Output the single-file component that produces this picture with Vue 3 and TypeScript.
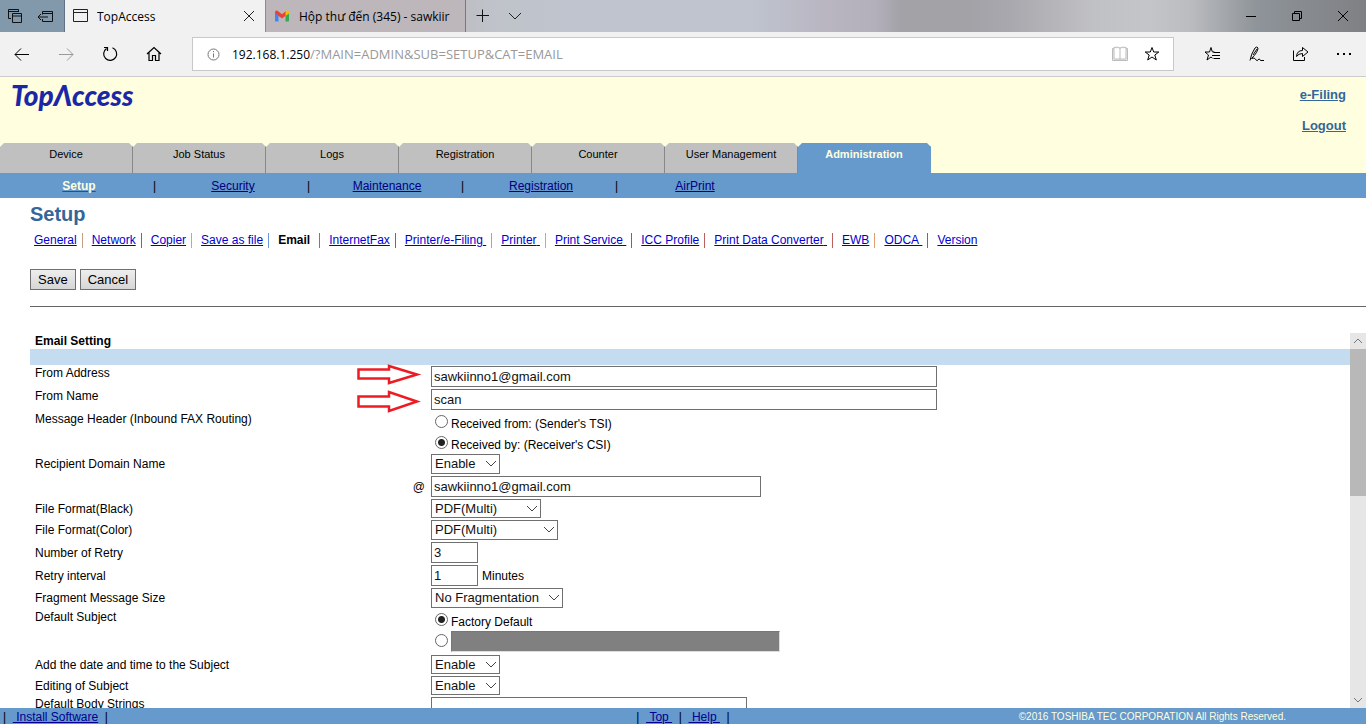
<script setup lang="ts">
import { ref } from 'vue'

interface Link { label: string; trail?: boolean; current?: boolean; bar?: string }

const tabs = ['Device', 'Job Status', 'Logs', 'Registration', 'Counter', 'User Management', 'Administration']
const sections = ['Setup', 'Security', 'Maintenance', 'Registration', 'AirPrint']
const pages: Link[] = [
  { label: 'General', bar: 'gold' },
  { label: 'Network', bar: 'violet' },
  { label: 'Copier', bar: 'orange' },
  { label: 'Save as file', bar: 'blue' },
  { label: 'Email', current: true, bar: 'red' },
  { label: 'InternetFax', bar: 'plum' },
  { label: 'Printer/e-Filing', trail: true, bar: 'gold' },
  { label: 'Printer', trail: true, bar: 'orange' },
  { label: 'Print Service', trail: true, bar: 'plum' },
  { label: 'ICC Profile', bar: 'red' },
  { label: 'Print Data Converter', trail: true, bar: 'red' },
  { label: 'EWB', bar: 'orange' },
  { label: 'ODCA', trail: true, bar: 'violet' },
  { label: 'Version' },
]

const fromAddress = ref('sawkiinno1@gmail.com')
const fromName = ref('scan')
const header = ref('by')
const domainEnabled = ref('Enable')
const domain = ref('sawkiinno1@gmail.com')
const black = ref('PDF(Multi)')
const color = ref('PDF(Multi)')
const retries = ref('3')
const interval = ref('1')
const fragment = ref('No Fragmentation')
const subject = ref('factory')
const customSubject = ref('')
const addDate = ref('Enable')
const editSubject = ref('Enable')
const body = ref('')
</script>

<template>
  <div class="window">
    <header class="titlebar">
      <div class="aside-tools">
        <button type="button" aria-label="Tabs set aside">
          <svg width="16" height="16" viewBox="0 0 16 16" fill="none" stroke="#111"><path d="M4 10.500H1.500V1.500H11.500V4M1.500 3.500H11M5.500 5.500H14.500V14.500H5.500ZM5.500 8H14.500"/></svg>
        </button>
        <button type="button" aria-label="Set these tabs aside">
          <svg width="16" height="16" viewBox="0 0 16 16" fill="none" stroke="#111"><path d="M5.500 6.500V3.500H15.500V13.500H5.500V11M5.500 5.500H15.500M11 9H1M4 6L1 9L4 12"/></svg>
        </button>
      </div>
      <div class="browser-tab active">
        <svg width="17" height="14" viewBox="0 0 17 14" fill="none" stroke="#222"><path d="M1.500 .5H15.500V12.500H1.500ZM1.500 3.500H15.500"/></svg>
        <span class="tab-title">TopAccess</span>
        <button type="button" aria-label="Close tab">
          <svg width="12" height="12" viewBox="0 0 12 12" stroke="#222"><path d="M1 1L11 11M11 1L1 11"/></svg>
        </button>
      </div>
      <div class="browser-tab mail">
        <svg width="14" height="12" viewBox="0 0 14 12"><path fill="#4285f4" d="M0 2L3.500 4.500V11.500H1Q0 11.500 0 10.500Z"/><path fill="#34a853" d="M10.500 4.500L14 2V10.500Q14 11.500 13 11.500H10.500Z"/><path fill="#ea4335" d="M0 2Q.5-.2 2.500 .8L7 4.200L11 1V5.500L7 8.500L3 5.500L0 3Z"/><path fill="#fbbc04" d="M10.500 1.500Q13.500-1 14 2V3.500L10.500 6Z"/></svg>
        <span class="tab-title">Hộp thư đến (345) - sawkiir</span>
      </div>
      <div class="tab-actions">
        <button type="button" aria-label="New tab"><svg width="14" height="14" viewBox="0 0 14 14" stroke="#111"><path d="M.5 6.500H13M6.500 .5V13"/></svg></button>
        <button type="button" aria-label="Tab previews"><svg width="14" height="8" viewBox="0 0 14 8" fill="none" stroke="#222"><path d="M1 1L7 7L13 1"/></svg></button>
      </div>
      <div class="window-controls">
        <button type="button" aria-label="Minimize"><svg width="12" height="12" viewBox="0 0 12 12" stroke="#000"><path d="M1 6.500H11"/></svg></button>
        <button type="button" aria-label="Restore"><svg width="12" height="12" viewBox="0 0 12 12" fill="none" stroke="#000"><path d="M1.500 3.500H8.500V10.500H1.500ZM3.500 3.500V1.500H10.500V8.500H8.500"/></svg></button>
        <button type="button" aria-label="Close"><svg width="12" height="12" viewBox="0 0 12 12" stroke="#000"><path d="M1 1L11 11M11 1L1 11"/></svg></button>
      </div>
    </header>

    <div class="toolbar">
      <div class="nav-buttons">
        <button type="button" aria-label="Back"><svg width="16" height="14" viewBox="0 0 16 14" fill="none" stroke="#000"><path d="M15 7.500H1M7 1.500L1 7.500L7 13.500"/></svg></button>
        <button type="button" aria-label="Forward" disabled><svg width="16" height="14" viewBox="0 0 16 14" fill="none" stroke="#999"><path d="M1 7.500H15M9 1.500L15 7.500L9 13.500"/></svg></button>
        <button type="button" aria-label="Refresh"><svg width="16" height="16" viewBox="0 0 16 16" fill="none" stroke="#000" stroke-width="1.200"><path d="M10.500 1.800A6.500 6.500 0 1 1 4.500 2.500M2 1.500H5.500V5"/></svg></button>
        <button type="button" aria-label="Home"><svg width="16" height="16" viewBox="0 0 16 16" fill="none" stroke="#000" stroke-width="1.200"><path d="M1 8L8 1.500L15 8M3 6.500V14.500H6.500V9.500H9.500V14.500H13V6.500"/></svg></button>
      </div>
      <div class="address">
        <svg width="13" height="13" viewBox="0 0 13 13" fill="none" stroke="#777"><circle cx="6.500" cy="6.500" r="5.500"/><path d="M6.500 5.500V9.500M6.500 3V4.200"/></svg>
        <a class="url" href="#"><b>192.168.1.250</b>/?MAIN=ADMIN&amp;SUB=SETUP&amp;CAT=EMAIL</a>
        <button type="button" aria-label="Reading view" disabled><svg width="16" height="16" viewBox="0 0 16 16" fill="#f0f0f0" stroke="#bbb"><path d="M.5 2.500H2V1.500Q5.500 .5 8 2Q10.500 .5 14 1.500V2.500H15.500V14.500H.5ZM8 2V13.500M2 2.500V13H14V2.500"/></svg></button>
        <button type="button" class="favorite" aria-label="Add to favorites"><svg width="16" height="16" viewBox="0 0 16 16" fill="none" stroke="#000"><path d="M8 1.500L9.700 6H14.800L10.800 9L12.300 14L8 11L3.700 14L5.200 9L1.200 6H6.300Z"/></svg></button>
      </div>
      <div class="side-buttons">
        <button type="button" aria-label="Hub"><svg width="18" height="16" viewBox="0 0 18 16" fill="none" stroke="#000"><path d="M10.500 6L8.300 5.800L7 1.500L5.500 6H1L4.500 9L3 14L7 11L8.500 12.200M9.500 6.500H16M8 9.500H16M9.500 12.500H16"/></svg></button>
        <button type="button" aria-label="Notes"><svg width="16" height="16" viewBox="0 0 16 16" fill="none" stroke="#000"><path d="M1 14.500Q2 8 6 2Q8 0 9 2Q9 6 2.500 12.500Q6 11 6.500 13.500Q8 16 10 13Q11 13 11.500 14.500H15M4 9L8 3"/></svg></button>
        <button type="button" aria-label="Share"><svg width="16" height="16" viewBox="0 0 16 16" fill="none" stroke="#000"><path d="M.5 4.500V14.500H11.500V11M3.500 10.500Q4 4.500 9.500 4.500V1.500L15 6L9.500 10.500V7.500Q5.500 7.500 3.500 10.500Z"/></svg></button>
        <button type="button" aria-label="More"><svg width="16" height="4" viewBox="0 0 16 4"><path d="M1 1H3V3H1ZM7 1H9V3H7ZM13 1H15V3H13Z"/></svg></button>
      </div>
    </div>

    <div class="banner">
      <h1 class="logo" aria-label="TopAccess">TopΛccess</h1>
      <div class="session">
        <a href="#">e-Filing</a>
        <a href="#">Logout</a>
      </div>
      <nav class="tabs">
        <button v-for="(t, i) in tabs" :key="t" type="button" :class="{ selected: i === 6 }">{{ t }}</button>
      </nav>
    </div>
    <nav class="sections">
      <div v-for="(s, i) in sections" :key="s" class="section">
        <a href="#" :class="{ selected: i === 0 }">{{ s }}</a>
        <span v-if="i < sections.length - 1" class="divider">|</span>
      </div>
    </nav>

    <div class="intro">
      <h2>Setup</h2>
      <nav class="pages">
        <span v-for="p in pages" :key="p.label" class="page" :class="[p.bar, { current: p.current }]">
          <b v-if="p.current">{{ p.label }}</b>
          <a v-else href="#">{{ p.label }}<template v-if="p.trail">&nbsp;</template></a>
        </span>
      </nav>
      <div class="actions">
        <button type="button">Save</button>
        <button type="button">Cancel</button>
      </div>
      <hr>
    </div>

    <main class="scroller">
      <form class="settings" @submit.prevent>
        <h3>Email Setting</h3>
        <div class="band"></div>
        <div class="row">
          <label class="name top" for="from-address">From Address</label>
          <div class="field">
            <svg class="pointer" width="66" height="24" viewBox="0 0 66 24" fill="none" stroke="#ed1c24" stroke-width="2.500"><path d="M2.500 7.500H33V4L61 12.500L33 21V16.500H2.500Z"/></svg>
            <input id="from-address" v-model="fromAddress" class="wide" type="text">
          </div>
        </div>
        <div class="row">
          <label class="name top" for="from-name">From Name</label>
          <div class="field">
            <svg class="pointer" width="66" height="30" viewBox="0 0 66 30" fill="none" stroke="#ed1c24" stroke-width="2.500"><path d="M2.500 11.500H33V7L61 16.500L33 26V21.500H2.500Z"/></svg>
            <input id="from-name" v-model="fromName" class="wide" type="text">
          </div>
        </div>
        <div class="row">
          <span class="name top">Message Header (Inbound FAX Routing)</span>
          <div class="choices">
            <label><input v-model="header" type="radio" name="header" value="from"><span>Received from: (Sender's TSI)</span></label>
            <label><input v-model="header" type="radio" name="header" value="by"><span>Received by: (Receiver's CSI)</span></label>
          </div>
        </div>
        <div class="row mid">
          <label class="name" for="domain-on">Recipient Domain Name</label>
          <div class="field"><select id="domain-on" v-model="domainEnabled" class="short"><option>Enable</option><option>Disable</option></select></div>
        </div>
        <div class="row">
          <label class="name at" for="domain">@</label>
          <div class="field"><input id="domain" v-model="domain" class="medium" type="text"></div>
        </div>
        <div class="row compact">
          <label class="name" for="black">File Format(Black)</label>
          <div class="field"><select id="black" v-model="black" class="format"><option>PDF(Multi)</option></select></div>
        </div>
        <div class="row mid">
          <label class="name" for="color">File Format(Color)</label>
          <div class="field"><select id="color" v-model="color" class="format-color"><option>PDF(Multi)</option></select></div>
        </div>
        <div class="row">
          <label class="name" for="retries">Number of Retry</label>
          <div class="field"><input id="retries" v-model="retries" class="tiny" type="text"></div>
        </div>
        <div class="row">
          <label class="name" for="interval">Retry interval</label>
          <div class="field"><input id="interval" v-model="interval" class="tiny" type="text"><span class="unit">Minutes</span></div>
        </div>
        <div class="row mid">
          <label class="name" for="fragment">Fragment Message Size</label>
          <div class="field"><select id="fragment" v-model="fragment" class="fragment"><option>No Fragmentation</option></select></div>
        </div>
        <div class="row">
          <span class="name top">Default Subject</span>
          <div class="choices">
            <label><input v-model="subject" type="radio" name="subject" value="factory"><span>Factory Default</span></label>
            <div class="custom">
              <input v-model="subject" type="radio" name="subject" value="custom" aria-label="Custom subject">
              <input v-model="customSubject" class="greyed" type="text" disabled aria-label="Custom subject text">
            </div>
          </div>
        </div>
        <div class="row compact">
          <label class="name" for="add-date">Add the date and time to the Subject</label>
          <div class="field"><select id="add-date" v-model="addDate" class="short"><option>Enable</option><option>Disable</option></select></div>
        </div>
        <div class="row compact">
          <label class="name" for="edit-subject">Editing of Subject</label>
          <div class="field"><select id="edit-subject" v-model="editSubject" class="short"><option>Enable</option><option>Disable</option></select></div>
        </div>
        <div class="row">
          <label class="name top" for="body">Default Body Strings</label>
          <div class="field"><textarea id="body" v-model="body"></textarea></div>
        </div>
      </form>
      <div class="scrollbar">
        <svg width="16" height="16" viewBox="0 0 16 16" fill="none" stroke="#777"><path d="M4 10L8 6L12 10"/></svg>
        <div class="track"><div class="thumb"></div></div>
        <svg width="16" height="16" viewBox="0 0 16 16" fill="none" stroke="#777"><path d="M4 6L8 10L12 6"/></svg>
      </div>
    </main>

    <footer class="footer">
      <div class="left">|&nbsp; <a href="#">&nbsp;Install Software</a>&nbsp; |</div>
      <div class="center">| &nbsp;<a href="#">&nbsp;Top&nbsp;</a>&nbsp; | &nbsp;<a href="#">&nbsp;Help&nbsp;</a>&nbsp; |</div>
      <div class="copyright">©2016 TOSHIBA TEC CORPORATION All Rights Reserved.</div>
    </footer>
  </div>
</template>

<style>
body { margin: 0; background: #fff; }
</style>

<style scoped>
* { box-sizing: border-box; }
.window {
  display: flex; flex-direction: column; height: 100vh; overflow: hidden;
  font: 12px/14px "Liberation Sans", Arial, sans-serif; color: #000;
}
button { font: inherit; color: inherit; background: none; border: 0; padding: 0; }
svg { display: block; flex: none; }

.titlebar {
  display: flex; flex: none; height: 32px;
  font-family: "Open Sans", "Noto Sans", sans-serif;
  background: linear-gradient(90deg, #8299ac 0, #8299ac 5%, #b3b3be 20%, #bdb5ba 30%, #bfc3c9 36%, #bfc4ce 42%, #bfc4ce 55%, #b8b4c0 61%, #b3b0bb 64%, #a3a2a7 66%, #a3a2a7 71%, #a9a8ae 74%, #c0c1c4 80%, #c4c5c8 84%, #bcbdc0 87%, #8e9499 92%, #7f8084 100%);
}
.aside-tools { display: flex; width: 65px; padding-right: 4px; border-right: 1px solid #5f7384; }
.aside-tools button { flex: 1; display: grid; place-items: center; }
.browser-tab { display: flex; align-items: center; width: 200px; }
.browser-tab.active { padding: 0 10px 0 7px; gap: 8px; background: #f1f1f1; border-right: 1px solid #8d8b91; width: 201px; }
.browser-tab.mail { padding-left: 9px; gap: 10px; border-right: 1px solid #77787e; background: #bdb6bb; }
.tab-title { flex: 1; overflow: hidden; white-space: nowrap; line-height: 20px; padding-top: 1px; }
.tab-actions { display: flex; gap: 18px; padding-left: 10px; }
.window-controls { display: flex; margin-left: auto; }
.window-controls button { width: 46px; display: grid; place-items: center; }

.toolbar { display: flex; flex: none; align-items: center; height: 45px; background: #f1f1f1; border-bottom: 1px solid #ccc; }
.nav-buttons { display: flex; width: 192px; padding-left: 14px; gap: 28px; align-items: center; }
.address {
  display: flex; flex: 1; align-items: center; gap: 12px; height: 34px; padding: 0 13px 0 14px;
  background: #fff; border: 1px solid #c8c8c8;
}
.favorite { margin-left: 4px; }
.url { flex: 1; margin-right: auto; color: #999; text-decoration: none; font: 13px/20px "Open Sans", "Noto Sans", sans-serif; }
.url b { font-weight: 400; font-size: 12px; color: #000; }
.side-buttons { display: flex; justify-content: space-between; align-items: center; width: 192px; padding: 0 14px 0 30px; }

.banner { flex: none; display: grid; grid-template-columns: 1fr auto; background: #ffffdf; }
.logo { margin: 0; padding-left: 11px; font: italic 900 28px/36px Lato, sans-serif; color: #1a28a8; }
.session { display: grid; gap: 17px; padding: 11px 20px 10px 0; justify-items: end; font: bold 13px/14px "Liberation Sans", Arial, sans-serif; }
.session a { color: #336699; }
.tabs { display: flex; grid-column: 1 / -1; height: 30px; font-size: 11px; }
.tabs button {
  width: 133px; padding-bottom: 8px; background: #c0c0c0; border-right: 1px solid #888;
  clip-path: polygon(0 4px, 4px 0, calc(100% - 4px) 0, 100% 4px, 100% 100%, 0 100%);
}
.tabs .selected { background: #6699cc; color: #ffffdf; font-weight: bold; border-color: #6699cc; }

.sections { flex: none; display: flex; height: 25px; padding-left: 2px; background: #6699cc; line-height: 26px; }
.section { position: relative; width: 154px; text-align: center; }
.section a { color: #000080; }
.section .selected { font-weight: bold; color: #ffffdf; text-decoration-color: green; }
.divider { position: absolute; right: 0; top: 0; }

.intro { flex: none; padding-left: 30px; }
h2 { margin: 0; padding-top: 4px; font-size: 20px; line-height: 24px; color: #336699; }
.pages { display: flex; padding: 7px 0 0 4px; white-space: nowrap; line-height: 15px; }
.page { padding-right: 5px; margin-right: 9px; border-right: 1px solid transparent; }
.page a { color: #0000cc; }
.page.current { padding-right: 9px; }
.gold { border-color: #c0a080; }
.orange { border-color: #e0a070; }
.violet { border-color: #6a62b8; }
.blue { border-color: #6a9ad8; }
.red { border-color: #b86060; }
.plum { border-color: #806080; }
.actions { display: flex; gap: 4px; padding-top: 21px; }
.actions button {
  height: 21px; padding: 0 7px; font-size: 13px; line-height: 19px;
  border: 1px solid #707070; background: linear-gradient(#eee, #d6d6d6);
}
hr { margin: 16px 0 0; border: 0; border-top: 1px solid #666; }

.scroller { display: flex; flex: 1; min-height: 0; padding: 26px 0 0 30px; overflow: hidden; }
.settings { flex: 1; min-width: 0; overflow: hidden; }
h3 { margin: 0; height: 16px; padding-left: 5px; font-size: 12px; line-height: 16px; }
.band { height: 16px; background: #c5dbf0; }
.row { display: grid; grid-template-columns: 401px 1fr; min-height: 23px; align-items: center; }
.row.mid { min-height: 22px; }
.row.compact { min-height: 21px; }
.name { padding-left: 5px; }
.name.top { align-self: start; padding-top: 1px; }
.name.at { text-align: right; padding-right: 6px; }
.field { position: relative; display: flex; align-items: center; }
.unit { padding-left: 4px; }
.pointer { position: absolute; right: 100%; margin-right: 9px; top: -4px; }
input[type="text"], select, textarea {
  height: 21px; margin: 0; padding: 0 2px; font: 13px/19px "Liberation Sans", Arial, sans-serif;
  border: 1px solid #707070; border-radius: 0; background: #fff; color: #111; outline: 0;
}
select {
  appearance: none; height: 20px; padding: 0 3px; line-height: 18px;
  background: url("data:image/svg+xml,%3Csvg xmlns='http://www.w3.org/2000/svg' width='12' height='8' fill='none' stroke='%23444'%3E%3Cpath d='M1 1L6 6L11 1'/%3E%3C/svg%3E") no-repeat right 2px top 5px #fff;
}
.compact select { height: 19px; line-height: 17px; }
.wide { width: 506px; }
.medium { width: 330px; }
.tiny { width: 47px; }
.short { width: 69px; }
.format { width: 110px; }
.format-color { width: 127px; }
.fragment { width: 132px; }
textarea { width: 316px; height: 60px; margin-top: 1px; resize: none; }
.choices label { display: flex; height: 21px; }
.choices label span { padding: 6px 0 0 3px; }
input[type="radio"] {
  appearance: none; flex: none; width: 13px; height: 13px; margin: 4px 0 0 4px;
  border: 1px solid #666; border-radius: 50%; background: #fff;
}
input[type="radio"]:checked { background: radial-gradient(circle, #222 0 3px, #fff 4px); }
.custom { display: flex; height: 24px; }
input.greyed { width: 329px; margin: 1px 0 0 3px; background: #808080; border: 1px solid #ddd; border-top-color: #777; border-left-color: #777; }

.scrollbar { display: flex; flex-direction: column; width: 16px; background: #e6e6e6; }
.track { flex: 1; }
.thumb { height: 43%; background: #b8b8b8; }

.footer { flex: none; display: grid; grid-template-columns: 1fr auto 1fr; height: 16px; line-height: 18px; background: #6699cc; white-space: nowrap; }
.footer a { color: #000090; }
.left { padding-left: 3px; }
.copyright { padding-right: 80px; text-align: right; color: #ffffdf; font-size: 10px; }
</style>
